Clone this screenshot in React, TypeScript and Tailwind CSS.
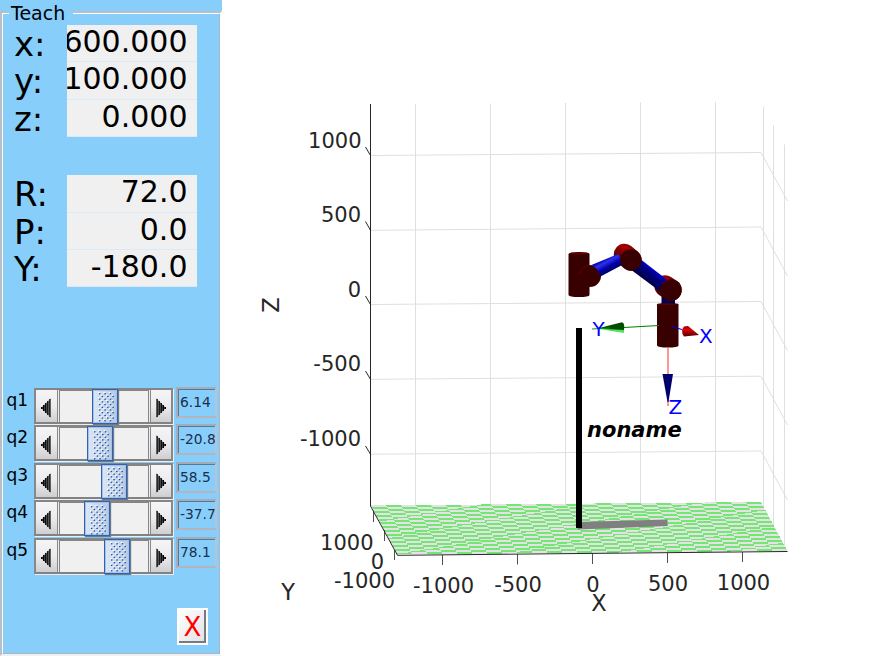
const joints = [
  { name: 'q1', value: '6.14', thumb: 33 },
  { name: 'q2', value: '-20.8', thumb: 28 },
  { name: 'q3', value: '58.5', thumb: 42 },
  { name: 'q4', value: '-37.7', thumb: 25 },
  { name: 'q5', value: '78.1', thumb: 45 },
];

function Readout({ label, value }: { label: string; value: string }) {
  return (
    <div className="flex h-[37.4px] shrink-0">
      <div className="w-[53px] shrink-0 pt-[1px] text-[34px] leading-[37px]">{label}</div>
      <div className="flex w-[130px] shrink-0 justify-end overflow-hidden border-b border-[#d9e9f5] bg-[#f0f0f0] pr-[9.500px] text-[30px] leading-[34px]">
        <span>{value}</span>
      </div>
    </div>
  );
}

function Arrow({ flip }: { flip?: boolean }) {
  const bars = [0, 1, 2, 3, 4];
  return (
    <svg width="10" height="20" viewBox="0 0 10 20" className={flip ? 'rotate-180' : ''}>
      {bars.map((i) => (
        <path key={i} d={`M${i * 2 + 0.8} ${9 - i * 2}V${11 + i * 2}`} stroke="#050505" strokeWidth={1.8 - i * 0.17} />
      ))}
      <path d="M0 10L10 0V20Z" fill="#000" opacity=".35" />
    </svg>
  );
}

function Thumb() {
  const rows = [0, 1, 2, 3, 4, 5, 6, 7, 8, 9, 10];
  return (
    <svg width="17" height="30" viewBox="0 0 17 30">
      {rows.map((r) =>
        [0, 1, 2].map((c) => {
          const x = c * 5.4 + (r % 2) * 2.7;
          const y = r * 2.7;
          return (
            <g key={`${r}-${c}`}>
              <rect x={x} y={y} width="1.7" height="1.5" fill="#fff" />
              <rect x={x + 0.9} y={y + 1.1} width="1.5" height="1.3" fill="#2450a0" />
            </g>
          );
        }),
      )}
    </svg>
  );
}

function JointRow({ name, value, thumb }: { name: string; value: string; thumb: number }) {
  return (
    <div className="flex h-[37.4px] items-start">
      <div className="w-[28px] pt-[1px] pl-[0.500px] text-[17px] leading-[24px]">{name}</div>
      <div className="mt-[1px] flex h-[36px] w-[139px] border-2 border-t-[#858585] border-r-[#888] border-b-[#828282] border-l-[#888] bg-[#eee] shadow-[1px_1px_0_#eee]">
        <div className="flex w-[22px] items-center justify-center border-r border-[#888] bg-linear-to-b from-[#f5f5f7] via-[#ececee] to-[#cfcfd2] pt-[4px] pr-[1px]">
          <Arrow />
        </div>
        <div className="ml-[1px] w-[90px] border-x border-t border-[#858585] bg-[#f0f0f0]">
          <div
            className="-mt-[2px] flex h-[35px] w-[26px] items-center justify-center border border-[#2f62b5] bg-linear-to-r from-[#dce7f5] to-[#b4c9e4] pt-[2px] pl-[3px] shadow-[1px_1px_1px_#6c7a8a,inset_0_0_0_1px_#a9c1e2]"
            style={{ marginLeft: thumb - 1 }}
          >
            <Thumb />
          </div>
        </div>
        <div className="ml-[1px] flex flex-1 items-center justify-center border-l border-[#888] bg-linear-to-b from-[#f5f5f7] via-[#ececee] to-[#cfcfd2] pt-[4px]">
          <Arrow flip />
        </div>
      </div>
      <div className="ml-[3px] h-[31px] w-[41px] overflow-hidden border-2 border-t-[#a3adb9] border-r-[#b8c5d1] border-b-[#b4b4bf] border-l-[#a4adba]">
        <div className="h-full border-t border-l border-[#54799a] pl-[1px] text-[13.800px] leading-[24px] text-[#1c2f50]">{value}</div>
      </div>
    </div>
  );
}

const N = 26;
const corner = (u: number, v: number) => `${(371 + 390 * u + 26.5 * v).toFixed(2)} ${(505.5 - 3.5 * u + 49 * v).toFixed(2)}`;
const tiles: string[] = [];
for (let r = 0; r < N; r++) {
  for (let c = 0; c < N; c++) {
    if ((r + c) % 2 === 1) {
      tiles.push(
        `M${corner(c / N, r / N)}L${corner((c + 1) / N, r / N)}L${corner((c + 1) / N, (r + 1) / N)}L${corner(c / N, (r + 1) / N)}Z`,
      );
    }
  }
}

function Plot() {
  return (
    <svg width="669" height="656" viewBox="222 0 669 656" fontFamily="'DejaVu Sans', sans-serif" fontSize="21" fill="#262626">
      <defs>
        <linearGradient id="link1" gradientUnits="userSpaceOnUse" x1="604" y1="259" x2="611" y2="272">
          <stop offset="0" stopColor="#0000a0" />
          <stop offset=".25" stopColor="#3030f0" />
          <stop offset=".6" stopColor="#0000a8" />
          <stop offset="1" stopColor="#000058" />
        </linearGradient>
        <linearGradient id="link2" gradientUnits="userSpaceOnUse" x1="655" y1="270" x2="646" y2="281">
          <stop offset="0" stopColor="#0000d0" />
          <stop offset=".3" stopColor="#000088" />
          <stop offset="1" stopColor="#000045" />
        </linearGradient>
        <linearGradient id="cap1" gradientUnits="userSpaceOnUse" x1="629" y1="243" x2="618" y2="263">
          <stop offset="0" stopColor="#600000" />
          <stop offset=".2" stopColor="#a80000" />
          <stop offset=".6" stopColor="#700000" />
          <stop offset="1" stopColor="#380000" />
        </linearGradient>
        <linearGradient id="cap2" gradientUnits="userSpaceOnUse" x1="670" y1="275" x2="657" y2="295">
          <stop offset="0" stopColor="#600000" />
          <stop offset=".2" stopColor="#a80000" />
          <stop offset=".6" stopColor="#700000" />
          <stop offset="1" stopColor="#400000" />
        </linearGradient>
        <linearGradient id="redCone" x1="0" y1="0" x2="0" y2="1">
          <stop offset="0" stopColor="#900000" />
          <stop offset=".35" stopColor="#e00000" />
          <stop offset="1" stopColor="#500000" />
        </linearGradient>
      </defs>

      {/* wall grid */}
      <g stroke="#dfdfdf" fill="none">
        <path d="M415.5 104V505M490.5 103.500V504M565.500 103V504M640.500 102.500V503M715.500 102V503M763.500 106.500V508M773.500 125.500V526M784.500 144.500V546" />
        <path d="M371 155.500L761 152.500L787.500 201M371 230.300L761 227L787.500 276M371 304.500L761 301.500L787.500 350.500M371 379.300L761 376.200L787.500 425M371 454.200L761 451L787.500 500" />
      </g>

      {/* floor */}
      <g shapeRendering="crispEdges">
        <path d={`M${corner(0, 0)}L${corner(1, 0)}L${corner(1, 1)}L${corner(0, 1)}Z`} fill="#e3e3e3" />
        <path d={tiles.join('')} fill="#73e673" />
      </g>

      {/* axes and ticks */}
      <g stroke="#262626" fill="none">
        <path d="M370.500 104V506L397.500 555.300L787.500 551.500" />
        <path d="M365.500 147L370.500 155.500M365.500 221.500L370.500 230.300M365.500 296L370.500 304.500M365.500 371L370.500 379.300M365.500 446L370.500 454.200" />
        <path d="M373.500 510.500V522M384.500 530V541M394.500 550V560M442.500 555V565M517.500 554V564.500M592.500 553.500V564M667.500 553V563M742.500 552V562" strokeOpacity=".8" />
      </g>

      <g textAnchor="end">
        <text x="361.500" y="148">1000</text>
        <text x="361" y="221.700">500</text>
        <text x="361" y="297">0</text>
        <text x="361" y="371">-500</text>
        <text x="361" y="446">-1000</text>
        <text x="373.500" y="550">1000</text>
        <text x="384" y="569">0</text>
        <text x="395" y="588">-1000</text>
      </g>
      <g textAnchor="middle">
        <text x="443.500" y="593">-1000</text>
        <text x="518" y="592">-500</text>
        <text x="593" y="592">0</text>
        <text x="668" y="591">500</text>
        <text x="743.500" y="590">1000</text>
        <text x="288" y="600" fontSize="22.500">Y</text>
        <text x="599" y="611" fontSize="22.500">X</text>
        <text transform="translate(279 305) rotate(-90)" fontSize="22.500">Z</text>
      </g>

      {/* shadow and base post */}
      <path d="M576 522L667.500 519.500V526L578 529.500Z" fill="#808080" />
      <path d="M576 328H582V528H576Z" fill="#000" />

      {/* arm */}
      <path d="M568.500 254Q569 252 579 252Q589.500 252 589.500 254V295Q589 297 579 297Q569 297 568.500 295Z" fill="#380000" />
      <ellipse cx="579" cy="253.500" rx="9.500" ry="1" fill="#680000" />
      <circle cx="590" cy="276" r="11" fill="#380000" />
      <path d="M579.500 274A11 11 0 0 1 590 265.500" fill="none" stroke="#650000" />
      <path d="M624.500 254.500L631 260" stroke="url(#cap1)" strokeWidth="21.400" strokeLinecap="round" />
      <path d="M591.500 265L618 254L624 264L600.500 276.500Q599 269 591.500 265Z" fill="url(#link1)" />
      <path d="M661.500 289H675V306H661.500Z" fill="#00005c" />
      <path d="M665 286L671 290" stroke="url(#cap2)" strokeWidth="21.400" strokeLinecap="round" />
      <path d="M641.500 260L668 280.500L659.500 291L632 270.500Z" fill="url(#link2)" />
      <circle cx="631" cy="260" r="10.700" fill="#380000" />
      <circle cx="671" cy="290" r="10.800" fill="#380000" />
      <path d="M657 304.500Q657 303 668 303Q678.500 303 678.500 304.500V345.500Q678 347.500 668 347.500Q658 347.500 657 345.500Z" fill="#380000" />
      <ellipse cx="668" cy="304.200" rx="9.800" ry=".8" fill="#5c0000" />

      {/* tool frame */}
      <path d="M624 327.500L659 325.500" stroke="#008000" />
      <path d="M599 329L624 329V333Z" fill="#4be65c" />
      <path d="M597 328.500L622 322.300Q625 323 624 330Z" fill="#004d00" />
      <path d="M592 329L610 328" stroke="#15901d" />
      <path d="M671.500 326.500L682 329.500" stroke="#0000e8" />
      <path d="M684 326.500L688 326L699 335L684 336.500Q680 331 684 326.500Z" fill="url(#redCone)" />
      <path d="M668 347.500V374M668 400V406" stroke="#ff5f5f" strokeWidth="1.300" />
      <path d="M662.500 374H673L668.500 402H667.500Z" fill="#00006c" />
      <g fill="#00f" fontSize="20">
        <text x="592.500" y="336">Y</text>
        <text x="699" y="342.500">X</text>
        <text x="668.500" y="413.500">Z</text>
      </g>
      <text x="587" y="437" fontWeight="700" fontStyle="italic" fill="#000">
        noname
      </text>
    </svg>
  );
}

export default function App() {
  return (
    <div className="flex h-[656px] w-[891px] overflow-hidden bg-white font-['DejaVu_Sans',sans-serif] text-black">
      <aside className="relative h-[656px] w-[222px] shrink-0 bg-[#87cefa] pt-[11px]">
        <div className="absolute top-[1px] left-[9px] bg-[#87cefa] pr-[8px] pl-[2px] text-[19px] leading-[24px]">Teach</div>
        <div className="h-[645px] border-2 border-t-[#b3bfcb] border-r-white border-b-[#f0f0f0] border-l-[#b7bec5]">
          <div className="flex h-full flex-col border border-t-white border-r-[#a7b9c8] border-b-[#a9b8c4] border-l-white">
            <div className="flex flex-col pt-[11px] pl-[11px]">
              <Readout label="x:" value="600.000" />
              <Readout label="y:" value="100.000" />
              <Readout label="z:" value="0.000" />
            </div>
            <div className="flex flex-col pt-[38px] pl-[11px]">
              <Readout label="R:" value="72.0" />
              <Readout label="P:" value="0.0" />
              <Readout label="Y:" value="-180.0" />
            </div>
            <div className="flex flex-col pt-[99.600px] pl-[3px]">
              {joints.map((j) => (
                <JointRow key={j.name} name={j.name} value={j.value} thumb={j.thumb} />
              ))}
            </div>
            <button className="mt-[34px] ml-[174px] flex h-[37px] w-[31px] shrink-0 items-center justify-center border-2 border-white bg-white text-[26px] text-[#f00]">
              <span className="flex h-[33px] w-[27px] items-center justify-center border-r-2 border-b-2 border-[#777b80] bg-linear-to-br from-white to-[#e3e3e6] pt-[3px] pl-[2px] leading-[28px]">
                X
              </span>
            </button>
          </div>
        </div>
      </aside>
      <main className="w-[669px] shrink-0">
        <Plot />
      </main>
    </div>
  );
}
